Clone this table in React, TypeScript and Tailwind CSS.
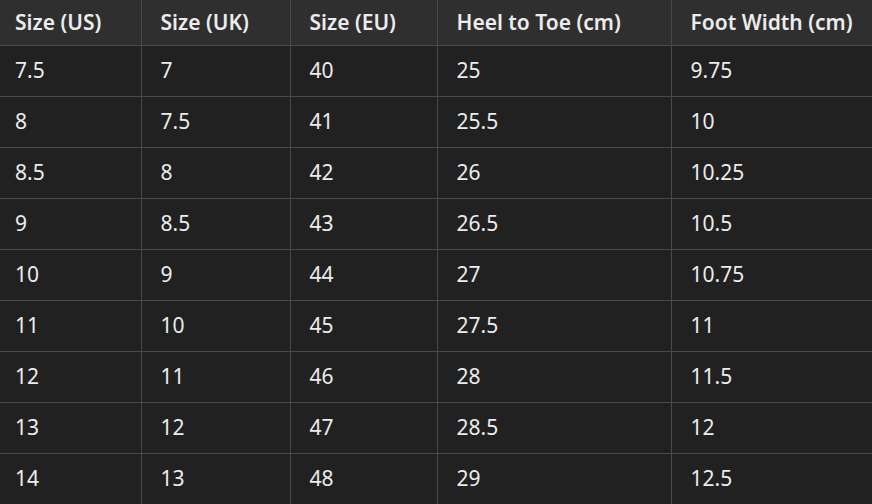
const headers = ["Size (US)", "Size (UK)", "Size (EU)", "Heel to Toe (cm)", "Foot Width (cm)"];

const rows = [
  ["7.5", "7", "40", "25", "9.75"],
  ["8", "7.5", "41", "25.5", "10"],
  ["8.5", "8", "42", "26", "10.25"],
  ["9", "8.5", "43", "26.5", "10.5"],
  ["10", "9", "44", "27", "10.75"],
  ["11", "10", "45", "27.5", "11"],
  ["12", "11", "46", "28", "11.5"],
  ["13", "12", "47", "28.5", "12"],
  ["14", "13", "48", "29", "12.5"],
];

export default function App() {
  return (
    <div className="w-[872px] h-[504px] overflow-hidden bg-[#212121] font-['Noto_Sans',sans-serif] text-[21px] text-[#ececec]">
      <table className="w-full table-fixed border-collapse">
        <colgroup>
          <col className="w-[141px]" />
          <col className="w-[149px]" />
          <col className="w-[147px]" />
          <col className="w-[234px]" />
          <col />
        </colgroup>
        <thead>
          <tr className="h-[45px] bg-[#2f2f2f]">
            {headers.map((h, i) => (
              <th
                key={h}
                className={`pr-2 text-left font-semibold leading-none border-b border-[#4a4a4a] ${i > 0 ? "border-l pl-[19px]" : "pl-[15px]"}`}
              >
                {h}
              </th>
            ))}
          </tr>
        </thead>
        <tbody>
          {rows.map((r, ri) => (
            <tr key={ri} className="h-[51px]">
              {r.map((c, i) => (
                <td
                  key={i}
                  className={`pr-2 leading-none border-b border-[#4a4a4a] ${i > 0 ? "border-l pl-[19px]" : "pl-[15px]"}`}
                >
                  {c}
                </td>
              ))}
            </tr>
          ))}
        </tbody>
      </table>
    </div>
  );
}
